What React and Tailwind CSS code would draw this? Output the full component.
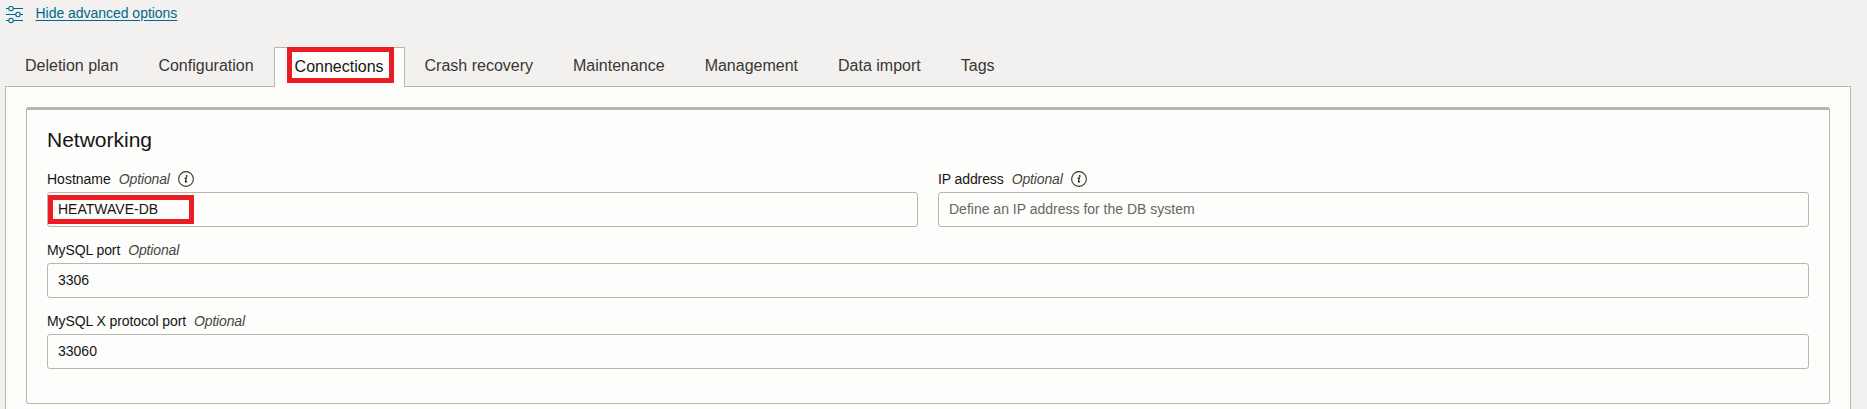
const inactive = "px-5 pt-[7px] leading-6 text-[#3a3632]";

function SlidersIcon() {
  return (
    <svg width="18" height="18" viewBox="0 0 18 18" fill="none" stroke="#00688c" strokeWidth="1.1">
      <path d="M0 2.5h2.8M7.2 2.5H17M0 8.5h9.8M14.2 8.5H17M0 14.5h2.8M7.2 14.5H17" />
      <circle cx="5" cy="2.5" r="2.2" />
      <circle cx="12" cy="8.5" r="2.2" />
      <circle cx="5" cy="14.5" r="2.2" />
    </svg>
  );
}

function InfoIcon() {
  return (
    <svg className="ml-2" width="16" height="16" viewBox="0 0 16 16" fill="none">
      <circle cx="8" cy="8" r="7.4" stroke="#3a3632" strokeWidth="1.1" />
      <circle cx="8.7" cy="4.9" r="0.9" fill="#161513" />
      <path d="M6.5 7.3L8.4 6.9L7.4 10.5Q7.3 11.4 9.1 10.5" stroke="#161513" strokeWidth="1.1" />
    </svg>
  );
}

function Field({ label, info, value, placeholder, marked }) {
  return (
    <div className="min-w-0 flex-1">
      <div className="flex h-5 items-center">
        <span className={marked ? "" : "tracking-[-0.1px]"}>{label}</span>
        <span className="ml-2 tracking-[-0.15px] text-[#4a4642] italic">Optional</span>
        {info && <InfoIcon />}
      </div>
      <div className="relative mt-[3px] flex h-[35px] items-center rounded-[3px] border border-[#bab5b0] px-2.5 pb-px">
        {value ? <span>{value}</span> : <span className="text-[#6b6560]">{placeholder}</span>}
        {marked && <div className="absolute top-0.5 left-0 h-[29px] w-[146px] border-5 border-[#ed1c24]" />}
      </div>
    </div>
  );
}

export default function App() {
  return (
    <div className="flex h-[409px] flex-col overflow-hidden bg-[#f3f1f0] pr-4 pl-[5px] font-['Liberation_Sans',Arial,sans-serif] text-[14px] leading-5 text-[#161513]">
      <div className="flex h-[47px] shrink-0 items-start">
        <div className="mt-[6px] ml-px"><SlidersIcon /></div>
        <a className="mt-[3px] ml-[11.5px] tracking-[-0.03px] text-[#00688c] underline underline-offset-2">Hide advanced options</a>
      </div>
      <nav className="z-10 -mb-px flex h-10 shrink-0 text-base">
        <div className={inactive}>Deletion plan</div>
        <div className={inactive}>Configuration</div>
        <div className="relative border border-b-0 border-[#bab5b0] bg-[#fdfdfb] px-5 pt-[7px] leading-6">
          Connections
          <div className="absolute -top-px left-3 h-9 w-[107px] border-5 border-[#ed1c24]" />
        </div>
        <div className={inactive}>Crash recovery</div>
        <div className={inactive}>Maintenance</div>
        <div className={inactive}>Management</div>
        <div className={inactive}>Data import</div>
        <div className={inactive}>Tags</div>
      </nav>
      <main className="h-[340px] shrink-0 border border-[#bab5b0] bg-[#fdfdfb] px-5 pt-5">
        <section className="h-[297px] rounded-[3px] border border-t-3 border-[#bab5b0] px-5 pt-[17px]">
          <h2 className="text-[21px] leading-[26px]">Networking</h2>
          <div className="mt-4 flex gap-5">
            <Field label="Hostname" info value="HEATWAVE-DB" marked />
            <Field label="IP address" info placeholder="Define an IP address for the DB system" />
          </div>
          <div className="mt-[13px] flex"><Field label="MySQL port" value="3306" /></div>
          <div className="mt-[13px] flex"><Field label="MySQL X protocol port" value="33060" /></div>
        </section>
      </main>
    </div>
  );
}
